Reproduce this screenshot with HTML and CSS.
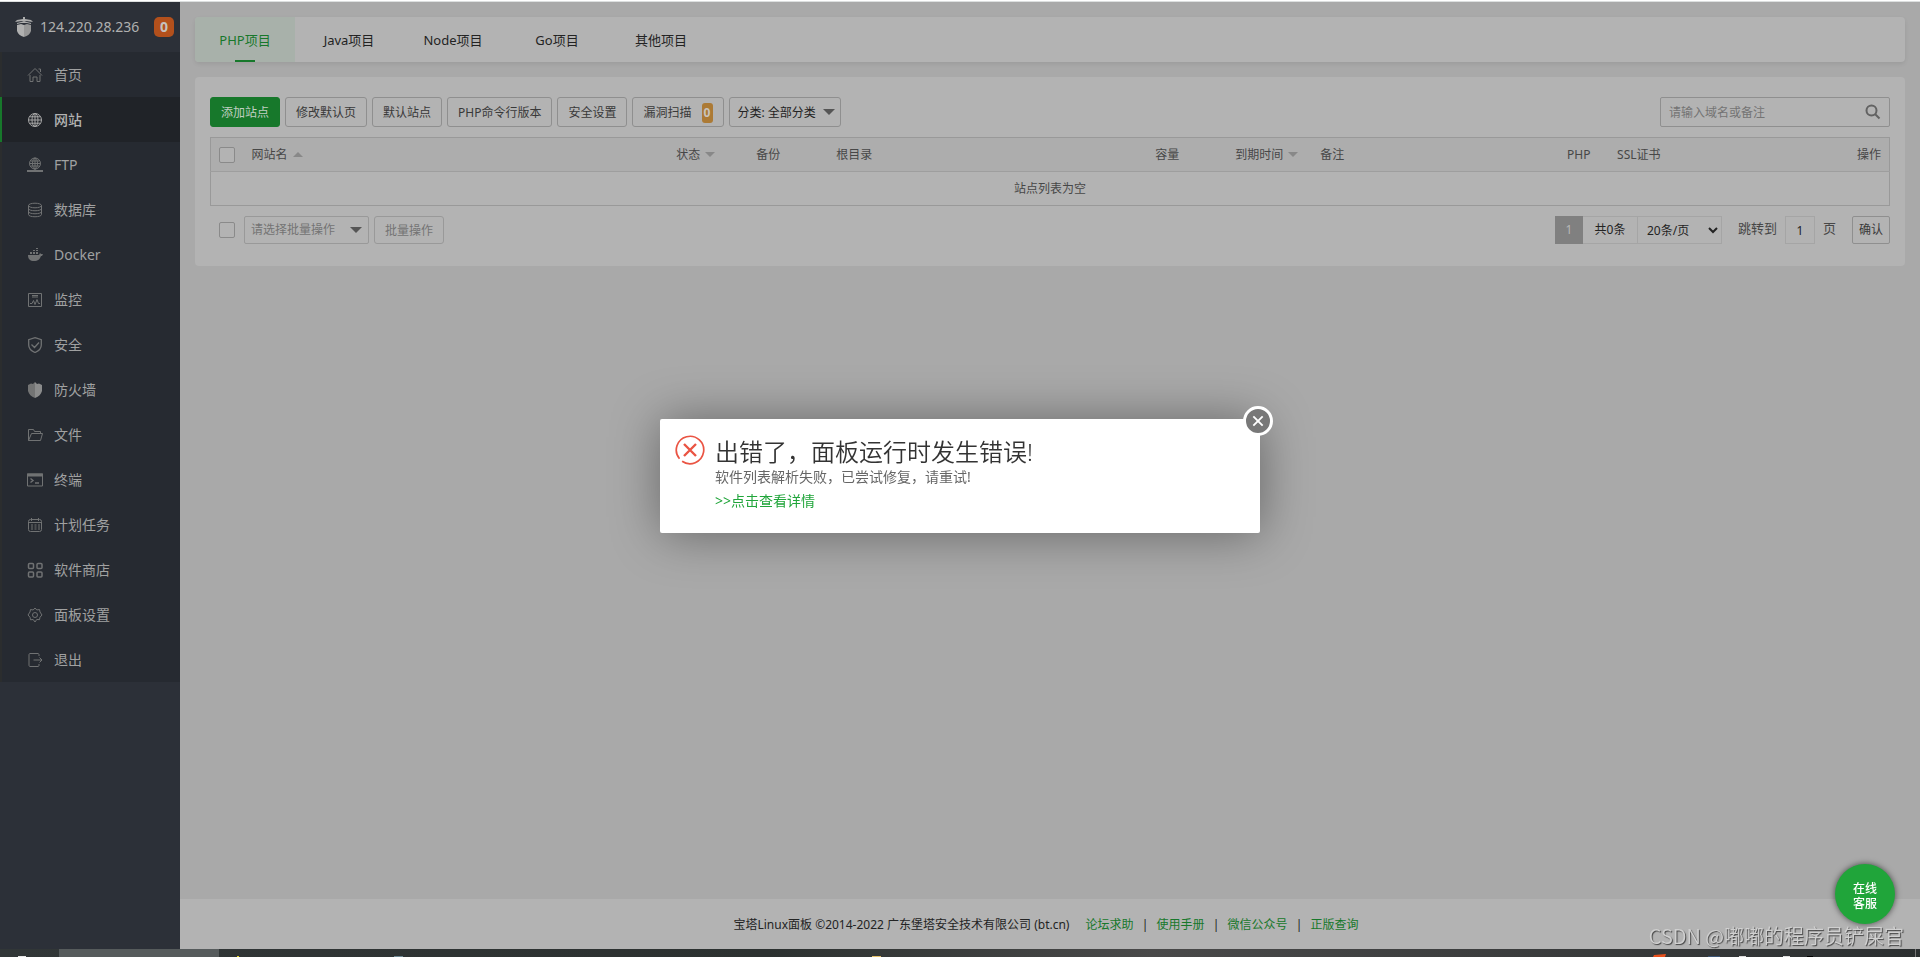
FILE: index.html
```html
<!DOCTYPE html>
<html lang="zh-CN">
<head>
<meta charset="utf-8">
<title>宝塔Linux面板</title>
<link rel="stylesheet" href="styles.css">
</head>
<body>
<div class="topline"></div>
<div class="layout">
  <aside class="sidebar">
    <div class="brand">
      <svg class="brand-icon" viewBox="0 0 18 20" fill="#acacac"><path d="M8 0h2v2l6 1 2 2-7-1H7L0 5l2-2 6-1z"/><path d="M6 5l3-1 3 1 4 1v1l-4-1H6L2 7V6z"/><path d="M2 8l4-1 3 1v12c-4-1-6-3-7-6z" fill="#b0b0b0"/><path d="M9 8l3-1 4 1v6c-1 3-3 5-7 6z" fill="#979797"/></svg>
      <span class="brand-ip">124.220.28.236</span>
      <span class="brand-badge">0</span>
    </div>
    <nav class="menu">
      <a class="menu-item" href="#"><svg viewBox="0 0 16 16"><path d="M1 8.500L8 1.500l7 7M3 8v6.500h3V10h4v4.500h3V8M11.500 2h2v3"/></svg>首页</a>
      <a class="menu-item active" href="#"><svg viewBox="0 0 16 16"><circle cx="8" cy="8" r="6.500"/><ellipse cx="8" cy="8" rx="3" ry="6.500"/><path d="M8 1.500v13M1.500 8h13M2.500 4.800h11M2.500 11.200h11"/></svg>网站</a>
      <a class="menu-item" href="#"><svg viewBox="0 0 16 16"><circle cx="8" cy="6.500" r="5.500"/><ellipse cx="8" cy="6.500" rx="2.500" ry="5.500"/><path d="M8 1v13M2.500 6.500h11M3.500 4h9M3.500 9h9"/><path d="M0 14h16" stroke-width="2"/></svg>FTP</a>
      <a class="menu-item" href="#"><svg viewBox="0 0 16 16"><ellipse cx="8" cy="3.500" rx="6.500" ry="2.300"/><path d="M1.500 3.500v9c0 3 13 3 13 0v-9M1.500 6.500c0 3 13 3 13 0M1.500 9.500c0 3 13 3 13 0"/></svg>数据库</a>
      <a class="menu-item" href="#"><svg viewBox="0 0 16 16"><path d="M1 8h11l1-2 1 1h2l-1 2h-1c-1 3-3 5-7 5-4 0-6-2-6-6zM3 5h2v2H3zM6 5h2v2H6zM9 5h2v2H9zM6 3h2v1H6zM9 3h2v1H9zM9 1h2v1H9z" fill="currentColor" stroke="none"/></svg>Docker</a>
      <a class="menu-item" href="#"><svg viewBox="0 0 16 16"><path d="M1.500 1.500h13v13h-13zM5 3.500h6M5 5h6M3 11.500h2l1.500-3 1.500 4 2-5 1.500 4H13"/></svg>监控</a>
      <a class="menu-item" href="#"><svg viewBox="0 0 16 16"><path d="M8 .700l6.300 2V8c0 3.500-2.300 5.800-6.300 7.500C4 13.800 1.700 11.500 1.700 8V2.700zM4.500 7.500l3 3 4.500-5" stroke-width="1.300"/></svg>安全</a>
      <a class="menu-item" href="#"><svg viewBox="0 0 16 16" stroke="none"><path d="M8 0L6 2 4 1.500 1 3v6c1 3.500 3 5.500 7 7z" fill="#737474"/><path d="M8 0l2 2 2-.500L15 3v6c-1 3.500-3 5.500-7 7z" fill="#8b8c8c"/></svg>防火墙</a>
      <a class="menu-item" href="#"><svg viewBox="0 0 16 16"><path d="M1.500 13.500v-11h5l1 2h6v2M1.500 13.500l3-7h11l-2 7z"/></svg>文件</a>
      <a class="menu-item" href="#"><svg viewBox="0 0 16 16"><path d="M.500 2h15v12H.500z"/><path d="M0 3h16" stroke-width="3"/><path d="M3.500 6.500l2.500 2-2.500 2M8 11h4" stroke-width="1.400"/></svg>终端</a>
      <a class="menu-item" href="#"><svg viewBox="0 0 16 16"><rect x="1.500" y="2.500" width="13" height="12" rx="2"/><path d="M1.500 5.500h13M4.500 1v3M11.500 1v3"/><path d="M4 8h9M4 10h9M4 12h9" stroke-dasharray="2 1.500"/></svg>计划任务</a>
      <a class="menu-item" href="#"><svg viewBox="0 0 16 16" stroke-width="1.500"><rect x="1.500" y="1.500" width="5" height="5" rx="1"/><rect x="10" y="1.500" width="5" height="5" rx="1"/><rect x="1.500" y="10" width="5" height="5" rx="1"/><rect x="10" y="10" width="5" height="5" rx="1"/></svg>软件商店</a>
      <a class="menu-item" href="#"><svg viewBox="0 0 16 16"><circle cx="8" cy="8" r="2.500"/><path d="M8 1l1.800 2 2.700-.500.500 2.500L15 8l-2 2.200-.500 2.500-2.700-.300L8 15l-1.800-2.500-2.700.300L3 10.200 1 8l2-3 .500-2.500 2.700.500z"/></svg>面板设置</a>
      <a class="menu-item" href="#"><svg viewBox="0 0 16 16"><path d="M12 4V2.500c0-.500-.500-1-1-1H3c-.500 0-1 .500-1 1v11c0 .500.500 1 1 1h8c.500 0 1-.500 1-1V12M6.500 8H15M12.500 5.500L15 8l-2.500 2.500"/></svg>退出</a>
    </nav>
  </aside>

  <div class="content">
    <main class="main">
      <nav class="tabs">
        <a class="tab current" href="#">PHP项目</a>
        <a class="tab" href="#">Java项目</a>
        <a class="tab" href="#">Node项目</a>
        <a class="tab" href="#">Go项目</a>
        <a class="tab" href="#">其他项目</a>
      </nav>

      <section class="card">
        <div class="toolbar">
          <button class="btn primary" type="button">添加站点</button>
          <button class="btn" type="button">修改默认页</button>
          <button class="btn" type="button">默认站点</button>
          <button class="btn" type="button">PHP命令行版本</button>
          <button class="btn" type="button">安全设置</button>
          <button class="btn" type="button">漏洞扫描<span class="scan-count">0</span></button>
          <button class="btn category" type="button">分类: 全部分类<span class="caret"></span></button>
          <div class="search">
            <input class="search-input" type="text" placeholder="请输入域名或备注" aria-label="搜索站点">
            <button class="search-btn" type="button" aria-label="搜索"><svg viewBox="0 0 16 16"><circle cx="6.500" cy="6.500" r="5"/><path d="M10 10l4.500 4.500"/></svg></button>
          </div>
        </div>

        <table class="sites">
          <colgroup><col class="w-check"><col class="w-name"><col class="w-80"><col class="w-80"><col class="w-root"><col class="w-80"><col class="w-expire"><col class="w-note"><col class="w-php"><col></colgroup>
          <thead>
            <tr>
              <th><input class="check" type="checkbox" aria-label="全选"></th>
              <th>网站名<span class="sort up"></span></th>
              <th>状态<span class="sort"></span></th>
              <th>备份</th>
              <th>根目录</th>
              <th>容量</th>
              <th>到期时间<span class="sort"></span></th>
              <th>备注</th>
              <th>PHP</th>
              <th><div class="split"><span>SSL证书</span><span>操作</span></div></th>
            </tr>
          </thead>
          <tbody><tr><td class="empty" colspan="10">站点列表为空</td></tr></tbody>
        </table>

        <div class="table-foot">
          <input class="check" type="checkbox" aria-label="选择全部站点">
          <button class="batch-select" type="button">请选择批量操作<span class="caret"></span></button>
          <button class="btn batch-btn" type="button" disabled>批量操作</button>
          <div class="pager">
            <span class="page-now">1</span>
            <span class="page-total">共0条</span>
            <select class="page-size" aria-label="每页条数"><option>20条/页</option></select>
            <label class="page-label" for="goto">跳转到</label>
            <input class="page-input" id="goto" type="text" value="1">
            <span class="page-unit">页</span>
            <button class="page-ok" type="button">确认</button>
          </div>
        </div>
      </section>
    </main>

    <footer class="footer">
      <span>宝塔Linux面板 ©2014-2022 广东堡塔安全技术有限公司 (bt.cn)</span>
      <a href="#">论坛求助</a><i>|</i><a href="#">使用手册</a><i>|</i><a href="#">微信公众号</a><i>|</i><a href="#">正版查询</a>
    </footer>
  </div>
</div>

<div class="taskbar">
  <svg class="task-left" viewBox="0 0 900 8"><path d="M59 0h160v8H59z" fill="#565b5c"/><path d="M18 7h8v1h-8z" fill="#e8e8e8"/><path d="M237 7h2v1h-2z" fill="#e6d522"/><path d="M394 7h9v1h-9z" fill="#6d8792"/><path d="M872 7h9v1h-9z" fill="#e5c069"/></svg>
  <svg class="task-right" viewBox="0 0 320 8"><path d="M54 6l12-1-1 3H53z" fill="#e8501c"/><path d="M108 7h12v1h-12z" fill="#3c5575"/><path d="M139 7h7v1h-7zM183 7h7v1h-7z" fill="#ddd"/><path d="M207 7h6v1h-6z" fill="#000"/><path d="M315 0h1v8h-1z" fill="#777"/></svg>
</div>

<button class="service" type="button">在线<br>客服</button>
<div class="watermark">CSDN @嘟嘟的程序员铲屎官</div>

<div class="dialog-layer">
  <div class="dialog" role="alertdialog" aria-labelledby="dialog-title">
    <svg class="dialog-icon" viewBox="0 0 30 30"><path d="M4.500 23.800A13.700 13.700 0 1 1 7.100 26.200" stroke-width="1.700"/><path d="M9 9l12 12M21 9L9 21" stroke-width="2.400"/></svg>
    <div>
      <h1 class="dialog-title" id="dialog-title">出错了，面板运行时发生错误!</h1>
      <p class="dialog-text">软件列表解析失败，已尝试修复，请重试!</p>
      <a class="dialog-link" href="#">&gt;&gt;点击查看详情</a>
    </div>
    <button class="dialog-close" type="button" aria-label="关闭"><svg viewBox="0 0 12 12"><path d="M2 2l8 8M10 2l-8 8"/></svg></button>
  </div>
</div>
</body>
</html>
```

FILE: styles.css
```css
* { box-sizing: border-box; }
body {
  margin: 0;
  min-height: 100vh;
  display: flex;
  flex-direction: column;
  background: #a9a9a9;
  color: #474747;
  font: 12px/18px "Noto Sans", "Noto Sans CJK SC", sans-serif;
}
button, input, select { font: inherit; color: inherit; margin: 0; }
a { text-decoration: none; color: inherit; }
.topline { height: 2px; background: #fff; border-bottom: 1px solid #dcdfdf; }
.layout { flex: 1; display: flex; }

/* Sidebar */
.sidebar { width: 180px; flex: none; background: #2c3038; }
.brand { height: 50px; padding: 0 6px 0 15px; display: flex; align-items: center; }
.brand-icon { width: 18px; height: 20px; margin-right: 7px; }
.brand-ip { font-size: 14px; color: #b0b0b0; }
.brand-badge {
  width: 20px; height: 20px; margin-left: auto; border-radius: 5px;
  background: #b3501c; color: #c6c1be; font-weight: bold; font-size: 14px; line-height: 20px; text-align: center;
}
.menu { background: #262a31; }
.menu-item {
  display: flex; align-items: center; height: 45px; padding-left: 25px;
  border-left: 2px solid #2b2d2e; color: #a0a1a1; font-size: 14px;
}
.menu-item svg {
  width: 16px; height: 16px; margin-right: 11px;
  fill: none; color: #707273;
}
.menu-item svg:not([stroke]) { stroke: currentColor; }
.menu-item.active { background: #202328; color: #b3b3b3; border-left-color: #17782b; font-weight: 500; }
.menu-item.active svg { color: #a6a6a6; }

/* Content */
.content { flex: 1; min-width: 0; display: flex; flex-direction: column; }
.main { flex: 1; padding: 15px; }
.tabs {
  display: flex; gap: 4px; margin-bottom: 15px; background: #b3b3b3;
  border-radius: 4px; box-shadow: 0 2px 4px rgba(0, 0, 0, .08); color: #232323;
}
.tab { width: 100px; height: 45px; font-size: 13px; line-height: 46px; text-align: center; }
.tab.current {
  color: #17782b; border-radius: 4px 0 0 4px;
  background: linear-gradient(#17782b, #17782b) center bottom / 20px 2px no-repeat, #a8b1aa;
}
.card { background: #b3b3b3; border-radius: 4px; padding: 20px 15px 22px; }
.toolbar { display: flex; gap: 5px; margin-bottom: 10px; }
.btn {
  height: 30px; padding: 1px 10px 0; border: 1px solid #8f8f8f; border-radius: 3px;
  background: #b3b3b3; color: #393939; white-space: nowrap;
}
.btn.primary { background: #17782b; border-color: #17782b; color: #c0cfc2; }
.scan-count {
  display: inline-block; width: 11px; height: 20px; margin-left: 10px; border-radius: 3px;
  background: #ac7a35; color: #c9c4bd; font-weight: bold; line-height: 20px;
}
.caret { display: inline-block; border: 6px solid transparent; border-top-color: #555; border-bottom: 0; vertical-align: 1px; }
.category { padding: 1px 5px 0 8px; color: #232323; }
.category .caret { margin-left: 7px; vertical-align: 2px; }
.search { display: flex; width: 230px; height: 30px; margin-left: auto; border: 1px solid #8f8f8f; border-radius: 2px; }
.search-input { flex: 1; min-width: 0; padding: 1px 8px 0; border: 0; background: none; outline: 0; }
.search-input::placeholder { color: #747474; opacity: 1; }
.search-btn { width: 32px; padding: 0 8px; border: 0; background: none; }
.search-btn svg { display: block; width: 16px; height: 16px; fill: none; stroke: #626262; stroke-width: 2; }

.sites { width: 100%; table-layout: fixed; border-collapse: collapse; border: 1px solid #999; }
.w-check { width: 33px; }
.w-name { width: 25.3%; }
.w-80 { width: 80px; }
.w-root { width: 19%; }
.w-expire { width: 85px; }
.w-note { width: 14.7%; }
.w-php { width: 50px; }
.sites th { height: 34px; padding: 0 8px; background: #adadad; font-weight: normal; text-align: left; white-space: nowrap; }
.sites td { height: 34px; padding: 0; border-top: 1px solid #9e9e9e; }
.sites .empty { text-align: center; }
.split { display: flex; justify-content: space-between; }
.check {
  appearance: none; display: block; width: 16px; height: 16px; flex: none;
  border: 1px solid #8a8a8a; border-radius: 2px; background: #b3b3b3;
}
.sort { display: inline-block; margin-left: 5px; border: 5px solid transparent; border-top-color: #888; border-bottom: 0; vertical-align: 2px; }
.sort.up { border-top: 0; border-bottom: 5px solid #888; }

.table-foot { display: flex; align-items: center; margin-top: 10px; padding-left: 9px; }
.batch-select {
  display: flex; align-items: center; justify-content: space-between; width: 125px; height: 28px;
  margin: 0 5px 0 9px; padding: 0 6px; border: 1px solid #999; border-radius: 2px; background: none; color: #747474;
}
.batch-btn { height: 28px; border-color: #999; color: #747474; }
.pager { display: flex; align-items: center; margin-left: auto; color: #232323; }
.page-now, .page-total { height: 28px; line-height: 28px; text-align: center; }
.page-now { width: 28px; background: #808080; color: #b8b8b8; }
.page-total { width: 54px; border: 1px solid #a5a5a5; border-width: 1px 0; line-height: 26px; }
.page-size { width: 85px; height: 28px; padding: 0 0 0 5px; border: 1px solid #a5a5a5; background: none; }
.page-label, .page-unit { padding-bottom: 4px; font-size: 13px; color: #474747; }
.page-label { margin: 0 8px 0 16px; }
.page-input { width: 30px; height: 28px; padding: 0; border: 1px solid #a5a5a5; background: none; text-align: center; }
.page-unit { margin: 0 16px 0 8px; }
.page-ok { width: 38px; height: 28px; padding: 0; border: 1px solid #8f8f8f; border-radius: 2px; background: none; color: #393939; }

.footer {
  height: 50px; padding-top: 1px; padding-right: 8px; display: flex; align-items: center; justify-content: center;
  background: #b3b3b3; color: #232323;
}
.footer span { margin-right: 16px; }
.footer a { color: #17782b; }
.footer i { width: 23px; text-align: center; font-style: normal; }

.taskbar { height: 8px; display: flex; justify-content: space-between; background: linear-gradient(90deg, #313637, #2c3130 40%, #494949 60%, #2b2f30); }
.task-left { width: 900px; height: 8px; }
.task-right { width: 320px; height: 8px; }

/* Floating elements */
.service {
  position: fixed; right: 25px; bottom: 33px; width: 60px; height: 60px; padding: 4px 0 0; border: 0; border-radius: 50%;
  background: #20a53a; color: #fff; line-height: 15px; font-weight: 500; box-shadow: 0 0 6px rgba(0, 0, 0, .6);
}
.watermark {
  position: fixed; right: 16px; bottom: 7px; font: 350 20px/28px "Noto Sans CJK SC", sans-serif;
  color: #d0d0d0; text-shadow: 1px 1px 1px #444; pointer-events: none; white-space: nowrap;
}
.dialog-layer { position: fixed; inset: 2px 0 8px; display: flex; align-items: center; justify-content: center; pointer-events: none; }
.dialog {
  position: relative; display: flex; gap: 10px; width: 600px; padding: 16px 15px 20px;
  background: #fff; border-radius: 2px; box-shadow: 1px 1px 50px rgba(0, 0, 0, .4); pointer-events: auto;
}
.dialog-icon { width: 30px; height: 30px; flex: none; fill: none; stroke: #ea5443; }
.dialog-title { margin: 0; font-size: 24px; line-height: 34px; font-weight: 350; color: #333; }
.dialog-text { margin: 0 0 4px; font-size: 14px; line-height: 16px; color: #666; }
.dialog-link { display: block; font-size: 14px; line-height: 24px; color: #20a53a; }
.dialog-close {
  position: absolute; top: -13px; right: -13px; display: flex; align-items: center; justify-content: center;
  width: 30px; height: 30px; padding: 0; border: 3px solid #fff; border-radius: 50%; background: #787878;
}
.dialog-close svg { width: 14px; height: 14px; flex: none; fill: none; stroke: #fff; stroke-width: 1.6; }
```
